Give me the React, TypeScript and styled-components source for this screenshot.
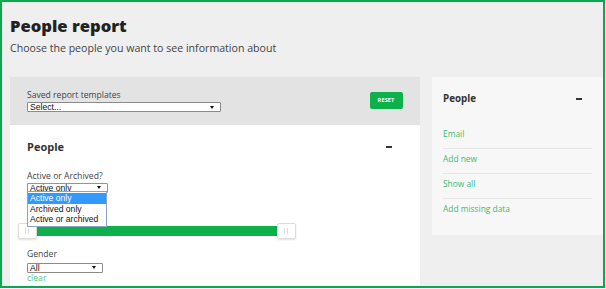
import React from "react";
import styled, { createGlobalStyle } from "styled-components";

const GlobalStyle = createGlobalStyle`
  html, body {
    margin: 0;
    padding: 0;
    background: #ffffff;
  }
  body {
    font-family: "Open Sans", "Liberation Sans", sans-serif;
  }
`;

const Frame = styled.div`
  box-sizing: border-box;
  width: 605px;
  height: 288px;
  border: 2px solid #0aa84f;
  background: #efefef;
  padding: 14.4px 0 0 8px;
  display: flex;
  flex-direction: column;
  overflow: hidden;
`;

const Title = styled.h1`
  margin: 0;
  font-size: 16.6px;
  line-height: 20px;
  font-weight: 800;
  color: #222222;
`;

const Subtitle = styled.p`
  margin: 4.2px 0 0;
  font-size: 10.6px;
  line-height: 14px;
  color: #444444;
`;

const Columns = styled.div`
  display: flex;
  gap: 12px;
  margin-top: 22.4px;
  flex: 1;
  align-items: flex-start;
`;

const LeftPanel = styled.div`
  width: 410px;
  align-self: stretch;
  display: flex;
  flex-direction: column;
`;

const TemplateBar = styled.div`
  box-sizing: border-box;
  height: 48px;
  background: #e3e3e3;
  padding: 12px 17.5px 0 17px;
  display: flex;
  justify-content: space-between;
  align-items: flex-start;
`;

const Field = styled.div<{ $gap?: number }>`
  display: flex;
  flex-direction: column;
  margin-top: ${(p) => p.$gap ?? 0}px;
`;

const Label = styled.label`
  font-size: 8.6px;
  line-height: 12px;
  color: #444444;
`;

const SelectBox = styled.div<{ $width: number; $focus?: boolean; $gap?: number }>`
  position: relative;
  box-sizing: border-box;
  width: ${(p) => p.$width}px;
  height: 10px;
  margin-top: ${(p) => p.$gap ?? 1}px;
  border: 1px solid ${(p) => (p.$focus ? "#6f9ad8" : "#8a8a8a")};
  border-radius: 1px;
  background: #ffffff;
  font-family: "Liberation Sans", Arial, sans-serif;
  font-size: 8.6px;
  line-height: 8px;
  color: #111111;
  padding-left: 2px;
  display: flex;
  align-items: center;
`;

const Arrow = styled.span`
  position: absolute;
  right: 6px;
  top: 2.5px;
  width: 0;
  height: 0;
  border-left: 2px solid transparent;
  border-right: 2px solid transparent;
  border-top: 3px solid #111111;
`;

const ResetButton = styled.button`
  margin-top: 3px;
  width: 33px;
  height: 17px;
  border: none;
  border-radius: 2px;
  background: #0db14b;
  color: #ffffff;
  font-family: "Open Sans", sans-serif;
  font-size: 5.6px;
  font-weight: 700;
  letter-spacing: 0.1px;
  padding: 0;
`;

const Section = styled.div`
  flex: 1;
  background: #ffffff;
  padding: 15px 28px 0 17px;
  display: flex;
  flex-direction: column;
`;

const SectionHead = styled.div`
  display: flex;
  justify-content: space-between;
  align-items: center;
`;

const SectionTitle = styled.h2<{ $size: number }>`
  margin: 0;
  font-size: ${(p) => p.$size}px;
  line-height: 14px;
  font-weight: 700;
  color: #333333;
`;

const Minus = styled.span`
  display: block;
  width: 6px;
  height: 1.5px;
  background: #333333;
`;

const DropWrap = styled.div`
  position: relative;
`;

const OptionList = styled.ul`
  position: absolute;
  left: 0;
  top: 9.5px;
  z-index: 2;
  box-sizing: border-box;
  width: 80px;
  margin: 0;
  padding: 1px 0 2px;
  list-style: none;
  background: #ffffff;
  border: 1px solid #8aa4c8;
  font-family: "Liberation Sans", Arial, sans-serif;
  font-size: 8.6px;
  line-height: 10.3px;
  color: #111111;
`;

const Option = styled.li<{ $active?: boolean }>`
  padding-left: 2px;
  background: ${(p) => (p.$active ? "#3399ff" : "transparent")};
  color: ${(p) => (p.$active ? "#ffffff" : "#111111")};
`;

const Slider = styled.div`
  position: relative;
  width: 259px;
  height: 16px;
  margin-top: 30px;
`;

const Range = styled.div`
  position: absolute;
  left: 9.5px;
  right: 9.5px;
  top: 3.5px;
  height: 9.5px;
  background: #0db14b;
`;

const Handle = styled.div<{ $side: "left" | "right" }>`
  position: absolute;
  ${(p) => p.$side}: -9.5px;
  top: 0;
  box-sizing: border-box;
  width: 19px;
  height: 16px;
  background: #ffffff;
  border: 1px solid #dcdcdc;
  border-radius: 2px;
  box-shadow: 0 1px 2px rgba(0, 0, 0, 0.12);
  display: flex;
  justify-content: center;
  align-items: center;
  gap: 1.5px;
  &::before,
  &::after {
    content: "";
    width: 1px;
    height: 6px;
    background: #dddddd;
  }
`;

const ClearLink = styled.a`
  font-size: 8.6px;
  line-height: 11px;
  color: #5cc68a;
  text-decoration: none;
`;

const RightPanel = styled.div`
  box-sizing: border-box;
  width: 171px;
  background: #f7f7f7;
  padding: 15px 11px 12px 11px;
`;

const RightHead = styled.div`
  display: flex;
  justify-content: space-between;
  align-items: center;
  padding-right: 10px;
`;

const LinkList = styled.ul`
  margin: 17.8px 0 0;
  padding: 0;
  list-style: none;
`;

const LinkItem = styled.li`
  box-sizing: border-box;
  height: 25px;
  padding-top: 3px;
  border-bottom: 1px solid #e6e6e6;
  font-size: 8.4px;
  line-height: 14px;
  &:last-child {
    border-bottom: none;
    height: 24px;
  }
`;

const Link = styled.a`
  color: #3dbb6b;
  text-decoration: none;
`;

const links = ["Email", "Add new", "Show all", "Add missing data"];

export default function App() {
  return (
    <>
      <GlobalStyle />
      <Frame>
        <Title>People report</Title>
        <Subtitle>Choose the people you want to see information about</Subtitle>
        <Columns>
          <LeftPanel>
            <TemplateBar>
              <Field>
                <Label>Saved report templates</Label>
                <SelectBox $width={194} $gap={1.5}>
                  Select...
                  <Arrow />
                </SelectBox>
              </Field>
              <ResetButton>RESET</ResetButton>
            </TemplateBar>
            <Section>
              <SectionHead>
                <SectionTitle $size={11}>People</SectionTitle>
                <Minus />
              </SectionHead>
              <Field $gap={16}>
                <Label>Active or Archived?</Label>
                <DropWrap>
                  <SelectBox $width={81} $focus>
                    Active only
                    <Arrow />
                  </SelectBox>
                  <OptionList>
                    <Option $active>Active only</Option>
                    <Option>Archived only</Option>
                    <Option>Active or archived</Option>
                  </OptionList>
                </DropWrap>
              </Field>
              <Slider>
                <Range />
                <Handle $side="left" />
                <Handle $side="right" />
              </Slider>
              <Field $gap={9.3}>
                <Label>Gender</Label>
                <SelectBox $width={76} $gap={2.4}>
                  All
                  <Arrow />
                </SelectBox>
                <ClearLink href="#">clear</ClearLink>
              </Field>
            </Section>
          </LeftPanel>
          <RightPanel>
            <RightHead>
              <SectionTitle $size={9.8}>People</SectionTitle>
              <Minus />
            </RightHead>
            <LinkList>
              {links.map((l) => (
                <LinkItem key={l}>
                  <Link href="#">{l}</Link>
                </LinkItem>
              ))}
            </LinkList>
          </RightPanel>
        </Columns>
      </Frame>
    </>
  );
}
